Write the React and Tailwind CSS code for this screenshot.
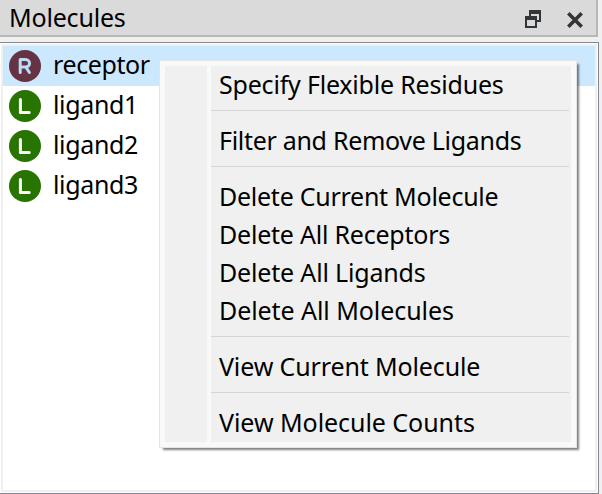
const molecules = [
  { name: "receptor", type: "R", tracking: "tracking-[-0.4px]" },
  { name: "ligand1", type: "L", tracking: "tracking-[-0.35px]" },
  { name: "ligand2", type: "L", tracking: "tracking-[-0.35px]" },
  { name: "ligand3", type: "L", tracking: "tracking-[-0.35px]" },
];

const groups = [
  [["Specify Flexible Residues", "tracking-[-0.2px]"]],
  [["Filter and Remove Ligands", "tracking-[-0.3px]"]],
  [
    ["Delete Current Molecule", "tracking-[-0.26px]"],
    ["Delete All Receptors", "tracking-[-0.22px]"],
    ["Delete All Ligands", "tracking-[-0.17px]"],
    ["Delete All Molecules", "tracking-[-0.07px]"],
  ],
  [["View Current Molecule", "tracking-[-0.13px]"]],
  [["View Molecule Counts", "tracking-[-0.05px]"]],
];

function Badge({ type }) {
  const receptor = type === "R";
  return (
    <svg width="32" height="32" viewBox="0 0 32 32" fill="none" className="shrink-0">
      <circle cx="16" cy="16" r="16" fill={receptor ? "#663344" : "#277400"} />
      <path
        d={receptor ? "M11.2 22.5V9.6H16.3C22 9.6 22 17 16.3 17H11.2M16.8 17L20.4 22.5" : "M11.4 9.4V22.5H20.2"}
        stroke={receptor ? "#b9dcf8" : "#fff"}
        strokeWidth="3"
        strokeLinecap="round"
        strokeLinejoin="round"
      />
    </svg>
  );
}

function ContextMenu() {
  return (
    <div className="absolute left-[159px] top-[60px] flex h-[388px] w-[418px] border border-[#e4e4e4] bg-[#f9f9f9] p-[5px] shadow-[3px_3px_2px_-1px_rgba(0,0,0,0.5)]">
      <div className="mr-1 w-[42px] bg-[#f0f0f0]" />
      <div className="flex-1 bg-[#f0f0f0] pt-px">
        {groups.map((items, index) => (
          <div key={index}>
            {index > 0 && <div className="mb-3 mt-[5px] mr-0.5 h-px bg-[#d5d5d5]" />}
            {items.map(([label, tracking]) => (
              <div key={label} className={`h-[38px] whitespace-nowrap pl-2 leading-[35px] ${tracking}`}>
                {label}
              </div>
            ))}
          </div>
        ))}
      </div>
    </div>
  );
}

export default function App() {
  return (
    <div className="relative flex h-[494px] w-[602px] flex-col overflow-hidden bg-[#f0f0f0] font-['Noto_Sans','Open_Sans',sans-serif] text-[25px] text-black">
      <header className="flex h-[37px] w-[598px] shrink-0 items-center border-b-2 border-r-2 border-[#b8b8b8] bg-[#dadada] pl-[9px]">
        <h1 className="flex-1 leading-[37px] tracking-[-0.19px]">Molecules</h1>
        <svg width="16" height="18" viewBox="0 0 16 18" fill="#333638" className="mr-[26px] mt-[3px]" shapeRendering="crispEdges">
          <path fillRule="evenodd" d="M4 0H16V12H12V10H14V4H6V6H4ZM0 6H12V18H0ZM2 10V16H10V10Z" />
        </svg>
        <svg width="16" height="16" viewBox="0 0 16 16" fill="none" stroke="#333638" strokeWidth="3.6" className="mr-[13px] mt-[5px]">
          <path d="M1.3 1.3L14.7 14.7M14.7 1.3L1.3 14.7" />
        </svg>
      </header>
      <main className="mt-[5px] h-[452px] w-[599px] border-b border-r border-t border-[#828790] bg-white p-px">
        <div className="h-full border-2 border-[#f0f0f0]">
          {molecules.map(({ name, type, tracking }) => (
            <div key={name} className={`flex h-10 items-center pl-1.5 ${type === "R" ? "bg-[#cce8ff]" : ""}`}>
              <Badge type={type} />
              <span className={`ml-3 pb-1 leading-[36px] ${tracking}`}>{name}</span>
            </div>
          ))}
        </div>
      </main>
      <ContextMenu />
    </div>
  );
}
